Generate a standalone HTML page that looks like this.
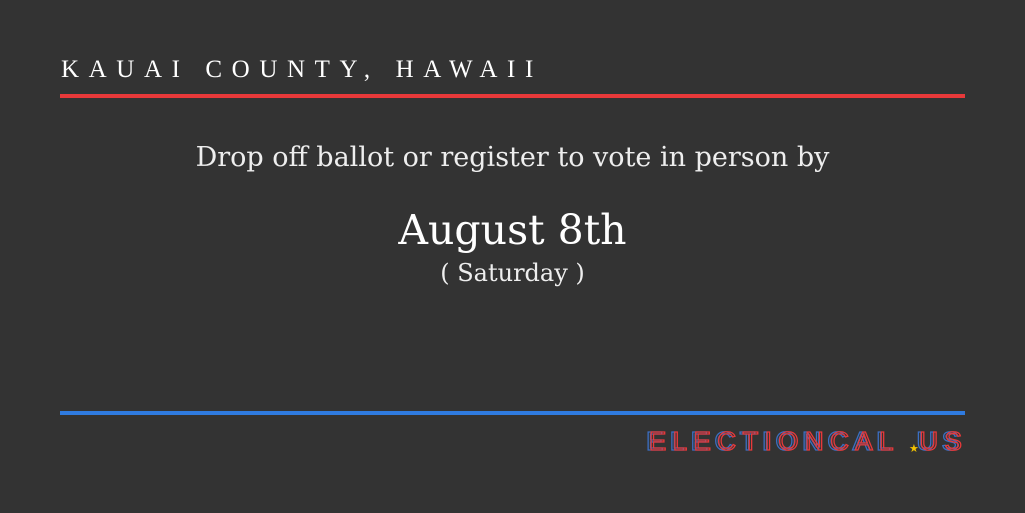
<!DOCTYPE html>
<html><head><style>
body{margin:0;width:1025px;height:513px;background:#333;overflow:hidden;font-family:"DejaVu Serif",serif;color:#fff;position:relative}
.h{position:absolute;left:61px;top:56px;font-family:"Liberation Serif",serif;font-size:25px;letter-spacing:9.6px;white-space:nowrap}
.r{position:absolute;left:60px;top:94px;width:905px;height:4px;background:#e8393a}
.b{position:absolute;left:60px;top:411px;width:905px;height:4px;background:#2f7be0}
.t{position:absolute;left:0;width:1025px;text-align:center;white-space:nowrap}
.lg{position:absolute;top:426px;font-family:"Liberation Sans",sans-serif;font-size:26px;letter-spacing:6.4px;color:transparent;white-space:nowrap}
</style></head><body>
<div class="h">KAUAI COUNTY, HAWAII</div>
<div class="r"></div>
<div class="t" style="top:142px;font-size:27px;color:#eee">Drop off ballot or register to vote in person by</div>
<div class="t" style="top:206px;font-size:41px">August 8th</div>
<div class="t" style="top:259px;font-size:24px;color:#eee">( Saturday )</div>
<div class="b"></div>
<div class="lg" style="left:646px;-webkit-text-stroke:1.3px #3b6fc2">ELECTIONCAL&#8194;US</div>
<div class="lg" style="left:649px;-webkit-text-stroke:1.3px #e8393a">ELECTIONCAL&#8194;US</div>
<div style="position:absolute;left:909px;top:442px;color:#f2c200;font-size:11px;font-family:'DejaVu Sans',sans-serif">★</div>
</body></html>
